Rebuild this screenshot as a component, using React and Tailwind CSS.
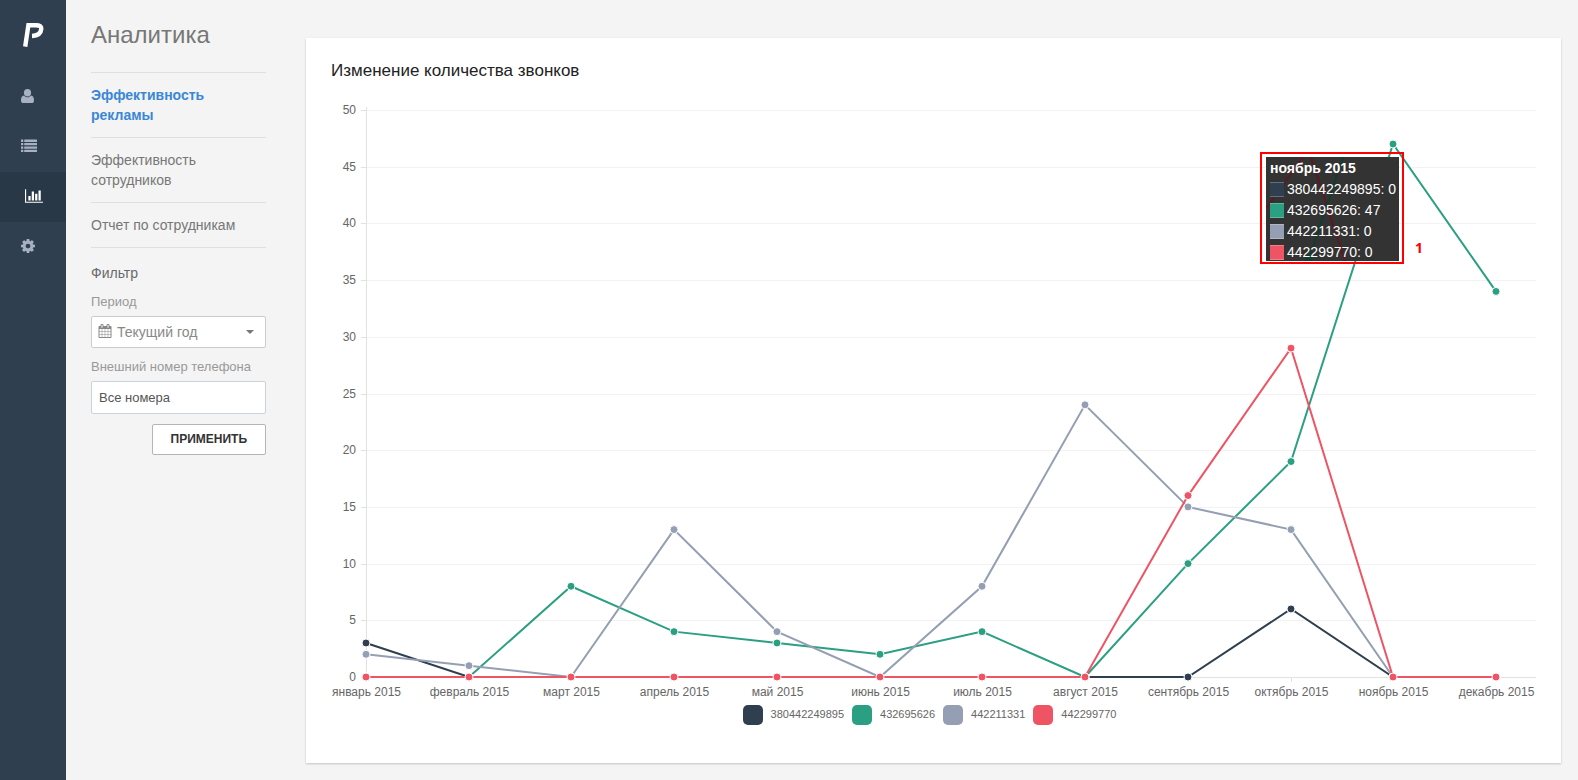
import { useLayoutEffect, useRef, useState } from "react";

const MONTHS = ["январь", "февраль", "март", "апрель", "май", "июнь", "июль", "август", "сентябрь", "октябрь", "ноябрь", "декабрь"];

const SERIES = [
	{ phone: "380442249895", color: "#2f3f4f", swatch: "bg-[#2f3f4f]", values: [3, 0, 0, 0, 0, 0, 0, 0, 0, 6, 0, 0] },
	{ phone: "432695626", color: "#2b9f81", swatch: "bg-[#2b9f81]", values: [0, 0, 8, 4, 3, 2, 4, 0, 10, 19, 47, 34] },
	{ phone: "442211331", color: "#959fb3", swatch: "bg-[#959fb3]", values: [2, 1, 0, 13, 4, 0, 8, 24, 15, 13, 0, 0] },
	{ phone: "442299770", color: "#ee5464", swatch: "bg-[#ee5464]", values: [0, 0, 0, 0, 0, 0, 0, 0, 16, 29, 0, 0] },
];

const REPORTS = [
	{ title: "Эффективность рекламы", active: true },
	{ title: "Эффективность сотрудников" },
	{ title: "Отчет по сотрудникам" },
];

const TICKS = [0, 5, 10, 15, 20, 25, 30, 35, 40, 45, 50];
const ACTIVE_MONTH = 10;

const Logo = () => (
	<svg width="24" height="26" viewBox="0 0 24 26" fill="none" stroke="#fff" strokeWidth="4.4">
		<path d="M3.2 24.600 6.400 3.200H14Q19.600 3.200 19.300 6.800 18.800 13.600 10 14" />
	</svg>
);

const UserIcon = () => (
	<svg width="13" height="14" viewBox="0 0 13 14" fill="currentColor">
		<ellipse cx="6.5" cy="3.8" rx="3.6" ry="3.8" />
		<path d="M3 6.4C.8 6.6 0 8.7 0 11.4 0 13 .9 14 2.3 14h8.4c1.4 0 2.3-1 2.3-2.6 0-2.7-.8-4.8-3-5C9.100 7.500 7.900 8.200 6.500 8.200S3.900 7.500 3 6.400z" />
	</svg>
);

const ListIcon = () => (
	<svg width="16" height="14" viewBox="0 0 16 14" fill="currentColor">
		{[0.6, 4, 7.400, 10.800].map((y) => (
			<g key={y}>
				<rect x="0" y={y} width="2.300" height="2.300" rx="0.300" />
				<rect x="3.200" y={y} width="12.800" height="2.300" rx="0.300" />
			</g>
		))}
	</svg>
);

const ChartIcon = () => (
	<svg width="18" height="16" viewBox="0 0 2048 1792" fill="currentColor">
		<path d="M640 896v512h-256v-512h256zm384-512v1024h-256v-1024h256zm1024 1152v128h-2048v-1536h128v1408h1920zm-640-896v768h-256v-768h256zm384-384v1152h-256v-1152h256z" />
	</svg>
);

const CogIcon = () => (
	<svg width="14" height="14" viewBox="128 128 1536 1536" fill="currentColor">
		<path d="M1152 896q0-106-75-181t-181-75-181 75-75 181 75 181 181 75 181-75 75-181zm512-109v222q0 12-8 23t-20 13l-185 28q-19 54-39 91 35 50 107 138 10 12 10 25t-9 23q-27 37-99 108t-94 71q-12 0-26-9l-138-108q-44 23-91 38-16 136-29 186-7 28-36 28h-222q-14 0-24.5-8.5t-11.5-21.5l-28-184q-49-16-90-37l-141 107q-10 9-25 9-14 0-25-11-126-114-165-168-7-10-7-23 0-12 8-23 15-21 51-66.5t54-70.5q-27-50-41-99l-183-27q-13-2-21-12.5t-8-23.5v-222q0-12 8-23t19-13l186-28q14-46 39-92-40-57-107-138-10-12-10-24 0-10 9-23 26-36 98.5-107.5t94.5-71.5q13 0 26 10l138 107q44-23 91-38 16-136 29-186 7-28 36-28h222q14 0 24.5 8.5t11.5 21.5l28 184q49 16 90 37l142-107q9-9 24-9 13 0 25 10 129 119 165 170 7 8 7 22 0 12-8 23-15 21-51 66.5t-54 70.5q26 50 41 98l183 28q13 2 21 12.5t8 23.5z" />
	</svg>
);

const CalendarIcon = () => (
	<svg width="14" height="14" viewBox="0 0 1792 1792" fill="currentColor">
		<path d="M192 1664h288v-288h-288v288zm352 0h320v-288h-320v288zm-352-352h288v-320h-288v320zm352 0h320v-320h-320v320zm-352-384h288v-288h-288v288zm736 736h320v-288h-320v288zm-384-736h320v-288h-320v288zm768 736h288v-288h-288v288zm-384-352h320v-320h-320v320zm-352-864v-288q0-13-9.5-22.5t-22.5-9.5h-64q-13 0-22.5 9.5t-9.5 22.5v288q0 13 9.5 22.5t22.5 9.5h64q13 0 22.5-9.5t9.5-22.5zm736 864h288v-320h-288v320zm-384-384h320v-288h-320v288zm384 0h288v-288h-288v288zm32-480v-288q0-13-9.5-22.5t-22.5-9.5h-64q-13 0-22.5 9.5t-9.5 22.5v288q0 13 9.5 22.5t22.5 9.5h64q13 0 22.5-9.5t9.5-22.5zm384-64v1280q0 52-38 90t-90 38h-1408q-52 0-90-38t-38-90v-1280q0-52 38-90t90-38h128v-96q0-66 47-113t113-47h64q66 0 113 47t47 113v96h384v-96q0-66 47-113t113-47h64q66 0 113 47t47 113v96h128q52 0 90 38t38 90z" />
	</svg>
);

const MENU = [
	{ label: "Клиенты", Icon: UserIcon },
	{ label: "Список", Icon: ListIcon },
	{ label: "Аналитика", Icon: ChartIcon, active: true },
	{ label: "Настройки", Icon: CogIcon },
];

const Rail = () => (
	<aside className="w-[66px] shrink-0 bg-[#2f3f4f]">
		<a href="#" aria-label="Главная" className="flex h-[72px] items-center pb-0.5 pl-[22px]">
			<Logo />
		</a>
		<nav>
			{MENU.map(({ label, Icon, active }) => (
				<a
					key={label}
					href="#"
					aria-label={label}
					className={active ? "flex h-[50px] items-center bg-[#293846] pb-0.5 pl-[25px] text-white" : "flex h-[50px] items-center pb-0.5 pl-[21px] text-[#a7b1c2]"}
				>
					<Icon />
				</a>
			))}
		</nav>
	</aside>
);

const Filter = () => (
	<form className="flex flex-col" onSubmit={(e) => e.preventDefault()}>
		<h2 className="mt-[15px] text-[14px] leading-5 text-[#676a6c]">Фильтр</h2>
		<label htmlFor="period" className="mt-[10px] text-[13px] leading-[18px] text-[#999]">Период</label>
		<div className="relative mt-[5px]">
			<select id="period" className="h-8 w-full appearance-none rounded-[2px] border border-[#ccc] bg-white pr-6 pl-[25px] text-[14px] text-[#888]">
				<option>Текущий год</option>
			</select>
			<span className="pointer-events-none absolute top-2 left-[7px] text-[#888]">
				<CalendarIcon />
			</span>
			<svg className="pointer-events-none absolute top-[14px] right-3" width="8" height="4" viewBox="0 0 8 4" fill="#777">
				<path d="M0 0h8L4 4z" />
			</svg>
		</div>
		<label htmlFor="phone" className="mt-[10px] text-[13px] leading-[18px] whitespace-nowrap text-[#999]">Внешний номер телефона</label>
		<input id="phone" type="text" defaultValue="Все номера" className="mt-[5px] h-[33px] w-full rounded-[2px] border border-[#c8d3db] bg-white px-[7px] text-[13px] text-[#555]" />
		<button type="submit" className="mt-[10px] h-[31px] self-end rounded-[2px] border border-[#b5b5b5] bg-white px-[18px] pb-0.5 text-[12px] font-bold text-[#333]">
			ПРИМЕНИТЬ
		</button>
	</form>
);

const Tooltip = ({ left }) => (
	<div className="absolute top-[52px] h-28 w-36 border-2 border-[#f00] p-1 pt-[3px]" style={{ left }}>
		<div className="relative h-[104px] w-[133px] overflow-hidden bg-[#333] pt-px pl-1 text-[14px] leading-[21px] text-white">
			<svg className="absolute top-0 left-0" width="133" height="104" fill="none" strokeWidth="2">
				<path d="M0 52 37 0M45 0 79 104" stroke="#5a1a22" />
				<path d="M43 102 77 0" stroke="#123c2f" />
				<circle cx="43" cy="102" r="4" fill="#123c2f" />
			</svg>
			<div className="relative font-bold">{MONTHS[ACTIVE_MONTH]} 2015</div>
			{SERIES.map((s) => (
				<div key={s.phone} className="relative flex items-center gap-[3px] whitespace-nowrap">
					<span className={`h-[15px] w-[14px] border-y border-white/25 ${s.swatch}`} />
					{s.phone}: {s.values[ACTIVE_MONTH]}
				</div>
			))}
		</div>
	</div>
);

const CallsChart = () => {
	const ref = useRef(null);
	const [width, setWidth] = useState(1205);

	useLayoutEffect(() => {
		const observer = new ResizeObserver(([entry]) => setWidth(entry.contentRect.width));
		observer.observe(ref.current);
		return () => observer.disconnect();
	}, []);

	const x = (i) => 35 + Math.round((i * (width - 75)) / 11);
	const y = (v) => 577 - v * 11.34;

	return (
		<div ref={ref} className="relative mt-[17px] h-[600px]">
			<svg width={width} height="600" className="absolute top-0 left-0" fontSize="12" fill="#666">
				{TICKS.map((t) => (
					<g key={t}>
						<path d={`M30 ${Math.round(y(t)) + 0.5}H${width}`} stroke={t ? "#f2f2f2" : "#e2e2e2"} />
						<path d={`M30 ${Math.round(y(t)) + 0.5}h5`} stroke="#e2e2e2" />
						<text x="25" y={Math.round(y(t)) + 4} textAnchor="end">{t}</text>
					</g>
				))}
				<path d="M35.500 7V582" stroke="#e2e2e2" />
				{MONTHS.map((m, i) => (
					<g key={m}>
						<path d={`M${x(i) + 0.5} 577v5`} stroke="#e2e2e2" />
						<text x={x(i) + 0.5} y="596" textAnchor="middle">{m} 2015</text>
					</g>
				))}
				{SERIES.map((s) => (
					<g key={s.phone}>
						<polyline points={s.values.map((v, i) => `${x(i)},${y(v)}`).join(" ")} fill="none" stroke={s.color} strokeWidth="2" />
						{s.values.map((v, i) => (
							<circle key={i} cx={x(i)} cy={y(v)} r="4" fill={s.color} stroke="#fff" />
						))}
					</g>
				))}
			</svg>
			<Tooltip left={x(ACTIVE_MONTH) - 133} />
			<span className="absolute top-[138px] font-['Open_Sans'] text-[14px] leading-5 font-bold text-[#f00]" style={{ left: x(ACTIVE_MONTH) + 22 }}>1</span>
		</div>
	);
};

const App = () => (
	<div className="flex min-h-screen bg-[#f4f4f4] font-['Liberation_Sans',Arial,sans-serif]">
		<Rail />
		<section className="ml-[25px] w-[175px] shrink-0 pt-[19px]">
			<h1 className="mb-[21px] text-2xl text-[#777]">Аналитика</h1>
			<ul className="border-t border-[#dfdfdf]">
				{REPORTS.map((r) => (
					<li key={r.title} className="border-b border-[#dfdfdf] py-3 text-[14px] leading-5">
						<a href="#" className={r.active ? "block pr-10 font-bold text-[#3a87d6]" : "block text-[#777]"}>{r.title}</a>
					</li>
				))}
			</ul>
			<Filter />
		</section>
		<main className="mt-[38px] mr-[17px] mb-[17px] ml-10 min-w-0 flex-1 self-start bg-white px-[25px] pt-[21px] pb-[38px] shadow-[0_1px_2px_rgba(0,0,0,0.2)]">
			<h2 className="text-[17px] leading-6 text-[#222]">Изменение количества звонков</h2>
			<CallsChart />
			<ul className="mt-[5px] flex justify-center text-[11px] text-[#666]">
				{SERIES.map((s) => (
					<li key={s.phone} className="mr-2 flex gap-2 leading-[18px]">
						<span className={`size-5 rounded-[5px] ${s.swatch}`} />
						{s.phone}
					</li>
				))}
			</ul>
		</main>
	</div>
);

export default App;
